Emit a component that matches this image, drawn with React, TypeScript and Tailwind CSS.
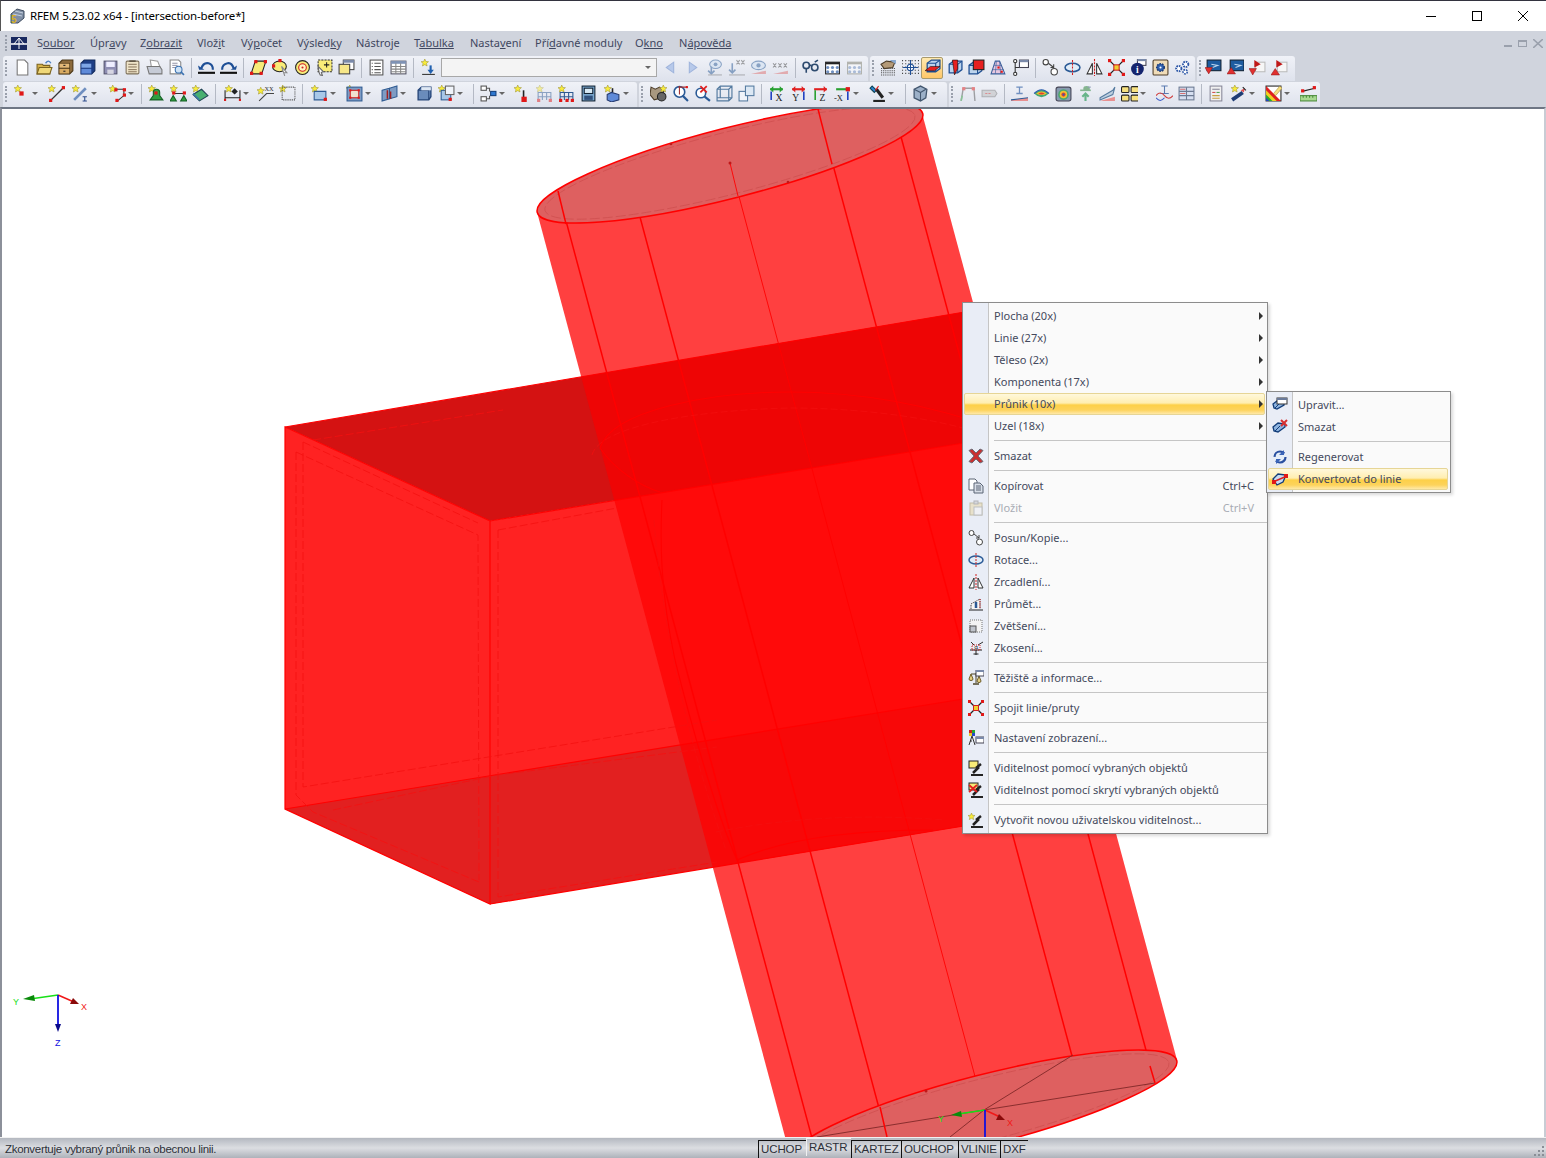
import React from "react";

const UI = "font-['Noto_Sans','DejaVu_Sans',sans-serif]";

const St = ({ x = 0, y = 0 }: { x?: number; y?: number }) => (
  <path transform={`translate(${x} ${y})`} d="M3.5 0l1 2.3 2.5.2-1.9 1.6.6 2.5-2.2-1.3-2.2 1.3.6-2.5L0 2.5l2.5-.2z" fill="#f8ec3a" stroke="#9a8f30" strokeWidth=".5" />
);
const R = ({ x, y, s = 3 }: { x: number; y: number; s?: number }) => <rect x={x} y={y} width={s} height={s} fill="#e01818" />;
const Cube = ({ x = 2, y = 2, f = "#bcd4ee" }: { x?: number; y?: number; f?: string }) => (
  <g transform={`translate(${x} ${y})`}><path d="M0 3l4-3h8v8l-4 3H0z" fill={f} stroke="#1f4f92" strokeWidth="1.200" /><path d="M0 3h8v8M8 3l4-3" fill="none" stroke="#1f4f92" /></g>
);
const Beads = ({ c = "#222" }: { c?: string }) => (
  <g><rect x="1.5" y="3" width="13" height="11" fill="#fff" stroke={c} /><path d="M1.5 3h13v2h-13z" fill={c} />{[3.5, 8, 12.5].map((x) => <g key={x}><circle cx={x} cy="8" r="1.5" fill="#6f8fc0" /><circle cx={x} cy="12" r="1.5" fill="#6f8fc0" /></g>)}</g>
);
const Pale = ({ children }: { children: React.ReactNode }) => <g opacity=".5">{children}</g>;

const I: Record<string, React.ReactNode> = {
  new: <path d="M3 1h7l3 3v11H3z" fill="#fff" stroke="#777" />,
  open: <g><path d="M1 5h5l1 1h6v8H1z" fill="#d6b24a" stroke="#7b6320" /><path d="M3 8h12l-2 6H1z" fill="#efd778" stroke="#7b6320" /><path d="M9 4q3-4 5 0" fill="none" stroke="#4b7fc0" strokeWidth="1.3" /></g>,
  brown: <g><path d="M1 4l3-3h10v10l-3 3H1z" fill="#8c6a3c" stroke="#4c3818" /><rect x="1" y="4" width="10" height="4.5" fill="#e2b878" stroke="#4c3818" strokeWidth=".6" /><rect x="1" y="9" width="10" height="5" fill="#d8aa62" stroke="#4c3818" strokeWidth=".6" /><rect x="5" y="5.5" width="2" height="1" fill="#222" /><rect x="5" y="11" width="2" height="1" fill="#222" /></g>,
  blue: <g><path d="M1 4l3-3h10v10l-3 3H1z" fill="#1f3f86" stroke="#122a5c" /><rect x="1" y="4" width="10" height="4.5" fill="#7ea6e6" stroke="#1f3f86" strokeWidth=".6" /><rect x="1" y="9" width="10" height="5" fill="#5f8ad8" stroke="#1f3f86" strokeWidth=".6" /></g>,
  save: <g><rect x="2" y="2" width="12" height="12" fill="#8f8fb4" stroke="#54546e" /><rect x="4" y="2.5" width="8" height="5" fill="#eef" /><rect x="5" y="10" width="6" height="4" fill="#d6d6e2" /></g>,
  clip: <g><rect x="2" y="2" width="12" height="12" rx="1" fill="#efe4c8" stroke="#7d705a" />{[5, 7.5, 10, 12].map((y) => <path key={y} d={`M4 ${y}h8`} stroke="#8d7a60" />)}<path d="M5 2h6" stroke="#5d5242" strokeWidth="1.5" /></g>,
  print: <g><path d="M4 1l7 1 2 5H5z" fill="#fff" stroke="#999" /><path d="M1 7h12l2 3v4H3z" fill="#c6cbd6" stroke="#777" /></g>,
  prev: <g><path d="M2 1h8l2 2v11H2z" fill="#fff" stroke="#888" />{[4, 6, 8].map((y) => <path key={y} d={`M4 ${y}h5`} stroke="#99a" />)}<circle cx="10" cy="10" r="3.2" fill="#cfe3f6" stroke="#3a71b0" /><path d="M12 12l3 3" stroke="#3a71b0" strokeWidth="1.6" /></g>,
  undo: <g><path d="M3 9q2-6 7-5 4 1 4 6" fill="none" stroke="#1e4f96" strokeWidth="2" /><path d="M0 6l6 4H1z" fill="#1e4f96" /><path d="M0 13h16" stroke="#111" strokeWidth="2" /></g>,
  redo: <g><path d="M2 10q0-5 5-6 4-1 6 5" fill="none" stroke="#1e4f96" strokeWidth="2" /><path d="M16 6l-1 4H10z" fill="#1e4f96" /><path d="M0 13h16" stroke="#111" strokeWidth="2" /></g>,
  para: <g><path d="M5 2h10l-4 12H1z" fill="#f8ec78" stroke="#222" /><R x={4} y={1} /><R x={13} y={1} /><R x={0} y={12} /><R x={9} y={12} /></g>,
  ell: <g><ellipse cx="7" cy="7" rx="6.5" ry="5" fill="#f8ec78" stroke="#222" /><R x={0} y={5} /><R x={6} y={0} /><path d="M9 7l5 6-3 0 1 3z" fill="#fff" stroke="#888" /></g>,
  tgt: <g><circle cx="8" cy="8" r="6.5" fill="#f8ec78" stroke="#222" /><circle cx="8" cy="8" r="3.6" fill="#fff6c0" stroke="#d02020" /><circle cx="8" cy="8" r="1" fill="#d02020" /></g>,
  addc: <g><rect x="2" y="1" width="13" height="11" fill="#f8ec78" stroke="#333" strokeDasharray="2 1" /><path d="M10 3v5M7.5 5.5h5" stroke="#222" /><path d="M2 7l5 5-2 .5 1 3-2-.5-1-2z" fill="#fff" stroke="#666" /></g>,
  win: <g><rect x="5" y="1" width="10" height="9" fill="#fff" stroke="#444" /><rect x="5" y="1" width="10" height="2.5" fill="#7a8aaa" /><rect x="1" y="5" width="10" height="9" fill="#f7e788" stroke="#444" /></g>,
  list: <g><rect x="2" y="1" width="12" height="14" fill="#fff" stroke="#555" />{[4, 7, 10, 13].map((y) => <path key={y} d={`M6 ${y}h6M3.5 ${y}h1`} stroke="#555" />)}</g>,
  grid: <g><rect x="1" y="2" width="14" height="12" fill="#fff" stroke="#556" /><rect x="1" y="2" width="14" height="2.5" fill="#7f93b6" /><path d="M1 7h14M1 9.5h14M1 12h14M5.5 4v10M10 4v10" stroke="#888" /></g>,
  stard: <g><St x={1} y={0} /><path d="M10 6v6" stroke="#2060b0" strokeWidth="2" /><path d="M7 10h6l-3 4z" fill="#2060b0" /><path d="M2 14.5h12" stroke="#333" /></g>,
  left: <path d="M11 3v10L4 8z" fill="#b7c9ea" stroke="#9fb4dc" />,
  right: <path d="M5 3v10l7-5z" fill="#b7c9ea" stroke="#9fb4dc" />,
  eyed: <Pale><ellipse cx="9" cy="5" rx="5.5" ry="4" fill="#cfe0f2" stroke="#2a5a96" /><circle cx="9" cy="5" r="1.8" fill="#2a5a96" /><path d="M5 7v6M2 11l3 3 3-3" fill="none" stroke="#2a5a96" strokeWidth="1.5" /><path d="M2 15h13" stroke="#777" /></Pale>,
  xxd: <Pale><path d="M4 4v8M1 10l3 3 3-3" fill="none" stroke="#2a5a96" strokeWidth="1.5" /><path d="M1 15h15" stroke="#777" /><path d="M8 1l3 4M11 1l-3 4M12.500 1l3 4M15.500 1l-3 4" stroke="#555" /></Pale>,
  eye: <Pale><ellipse cx="8" cy="6" rx="6.500" ry="4" fill="#cfe0f2" stroke="#2a5a96" /><circle cx="8" cy="6" r="2" fill="#2a5a96" /><path d="M1 14l14-3v3z" fill="#e07070" /></Pale>,
  xx: <Pale><path d="M1 4l3 4M4 4l-3 4M6 4l3 4M9 4l-3 4M11 4l3 4M14 4l-3 4" stroke="#444" /><path d="M1 14l14-3v3z" fill="#e07070" /></Pale>,
  gef: <g><circle cx="4" cy="6" r="3" fill="none" stroke="#2c4a6e" strokeWidth="1.5" /><circle cx="12" cy="8" r="3" fill="none" stroke="#2c4a6e" strokeWidth="1.5" /><path d="M4 9v4M7 6h2M12 3l3-2" stroke="#2c4a6e" strokeWidth="1.5" /></g>,
  beads: <Beads />,
  beadp: <Pale><Beads c="#776" /></Pale>,
  hand: <g>{[9, 11, 13, 15].map((y) => <path key={y} d={`M1 ${y}h14`} stroke="#444" strokeDasharray="1 1" />)}<path d="M1 5l5-3 8 1-2 5-8 1z" fill="#b49a78" stroke="#4c3c28" /><path d="M9 1h6v4" fill="#88a8d0" /></g>,
  gridt: <g>{[1, 4, 7, 10, 13].map((y) => <path key={y} d={`M0 ${y + .5}h16`} stroke="#444" strokeDasharray="1 2" />)}<circle cx="8" cy="8" r="3" fill="#fff" stroke="#1e4f96" /><path d="M8 1v14M1 8h14" stroke="#1e4f96" /></g>,
  cubeF: <g><Cube x={3} y={1} /><path d="M1 11l5-4h9l-5 4z" fill="#e62020" stroke="#000" strokeWidth=".5" /></g>,
  cubeV: <g><Cube x={3} y={2} /><path d="M6 1l2 14 3-6V1z" fill="#e62020" stroke="#000" strokeWidth=".5" /></g>,
  cubeR: <g><Cube x={1} y={3} /><rect x="5" y="1" width="10" height="9" fill="#e62020" stroke="#222" /></g>,
  gridp: <g><path d="M5 2h4l5 12H1z" fill="#e8c8e0" stroke="#3a5f9a" /><path d="M4 6h7M2 10h11M6 2l-1 12M9 2l1 12" stroke="#3a5f9a" strokeWidth=".6" /><R x={7} y={7} s={2} /><R x={10} y={11} s={2} /></g>,
  branch: <g><circle cx="3" cy="14" r="1.5" fill="#fff" stroke="#333" /><circle cx="3" cy="2" r="1.5" fill="#fff" stroke="#333" /><path d="M3 3v10M3 8h5" stroke="#333" /><rect x="7" y="1" width="8.500" height="7" fill="#fff" stroke="#445" /><rect x="7" y="1" width="8.500" height="2" fill="#7a8aaa" /></g>,
  move: <g><circle cx="3.500" cy="3" r="2.500" fill="#fff" stroke="#444" /><path d="M6 4l5 4M11 5v3H8" fill="none" stroke="#444" /><circle cx="11.500" cy="12" r="3" fill="#fff" stroke="#444" /></g>,
  rot: <g><ellipse cx="8" cy="8" rx="7" ry="4" fill="#e0ecf8" stroke="#2a5a96" strokeWidth="1.500" /><path d="M8 1v14" stroke="#d02020" strokeDasharray="2 1" /></g>,
  mir: <g><path d="M1 14L6 4v10zM15 14L10 4v10z" fill="#fff" stroke="#333" /><path d="M8 0v16" stroke="#d02020" strokeDasharray="2 1" /></g>,
  conn: <g><path d="M2 2l12 12M14 2L2 14" stroke="#222" strokeWidth="1.300" /><rect x="5.500" y="5.500" width="5" height="5" fill="#f0d030" stroke="#d02020" /><R x={0} y={0} /><R x={13} y={0} /><R x={0} y={13} /><R x={13} y={13} /></g>,
  info: <g><rect x="7" y="0" width="8" height="6" fill="#fff" stroke="#445" /><rect x="7" y="0" width="8" height="2" fill="#7a8aaa" /><circle cx="7" cy="9.500" r="6" fill="#14246e" /><text x="7" y="13" fontSize="9" fontWeight="700" textAnchor="middle" fill="#fff" fontFamily="Liberation Serif">i</text></g>,
  gearb: <g><rect x="1" y="1" width="14" height="14" rx="1" fill="#f0dcb8" stroke="#4c3c28" /><circle cx="8" cy="8" r="3.500" fill="#3060b0" stroke="#1e3c74" strokeWidth="1.500" strokeDasharray="1.500 1" /><circle cx="8" cy="8" r="1" fill="#fff" /></g>,
  gears: <g><circle cx="4.500" cy="9" r="2.500" fill="#fff" stroke="#2e58a8" strokeWidth="1.800" strokeDasharray="1.500 .8" /><circle cx="11" cy="5" r="2.500" fill="#fff" stroke="#2e58a8" strokeWidth="1.800" strokeDasharray="1.500 .8" /><circle cx="10.500" cy="12" r="2" fill="#fff" stroke="#2e58a8" strokeWidth="1.500" strokeDasharray="1.500 .8" /></g>,
  bd: <g><rect x="2" y="1" width="13" height="10" fill="#1e5ca0" stroke="#123" /><path d="M6 5l6 1-5 2" fill="none" stroke="#bcd6f0" /><path d="M0 8h7l-3.500 6z" fill="#e03030" stroke="#901818" strokeWidth=".5" /></g>,
  bu: <g><rect x="3" y="1" width="13" height="10" fill="#1e5ca0" stroke="#123" /><path d="M7 5l6 1-5 2" fill="none" stroke="#bcd6f0" /><path d="M0 14h8L4 8z" fill="#e03030" stroke="#901818" strokeWidth=".5" /></g>,
  rd: <g><rect x="6" y="3" width="9" height="9" fill="#f6f6f6" stroke="#bbb" /><path d="M5 1l6 4-6 3z" fill="#c01818" /><path d="M0 9h7l-3.500 6z" fill="#e03030" stroke="#901818" strokeWidth=".5" /></g>,
  ru: <g><rect x="6" y="3" width="9" height="9" fill="#f6f6f6" stroke="#bbb" /><path d="M5 1l6 4-6 3z" fill="#c01818" /><path d="M0 15h8L4 9z" fill="#e03030" stroke="#901818" strokeWidth=".5" /></g>,
  node: <g><St x={1} y={0} /><R x={6} y={6} s={4} /></g>,
  line: <g><St x={0} y={0} /><path d="M3 14L14 3" stroke="#333" strokeWidth="1.300" /><R x={1} y={13} /><R x={13} y={1} /></g>,
  ibeam: <g><St x={0} y={0} /><path d="M2 14L13 3" stroke="#6f8fc0" strokeWidth="2.500" /><path d="M10 11h4M12 11v4M10 15h4" stroke="#2a4a8a" /></g>,
  poly: <g><St x={0} y={0} /><path d="M6 4h8v6l-6 5" fill="none" stroke="#333" /><R x={5} y={3} /><R x={13} y={3} /><R x={13} y={8} /><R x={6} y={13} /></g>,
  supp: <g><St x={0} y={0} /><path d="M8 4a3 3 0 0 1 3 3v3l3 4H2l3-4V7a3 3 0 0 1 3-3z" fill="#30a040" stroke="#146024" /><R x={6} y={6} /></g>,
  supl: <g><St x={0} y={0} /><path d="M3 8h10" stroke="#333" /><R x={2} y={6} /><R x={12} y={6} /><path d="M0 15l3-5 3 5zM10 15l3-5 3 5z" fill="#30a040" stroke="#146024" /></g>,
  surf: <g><St x={0} y={0} /><path d="M1 9l8-5 6 6-8 5z" fill="#48b070" stroke="#245" /><path d="M1 9l6 6v-2L1 7z" fill="#3a7aa8" /></g>,
  dim: <g><St x={1} y={0} /><path d="M7 6l3-3 3 3-3 3z" fill="#222" /><path d="M1 5v10M15 5v10M1 12h14" stroke="#222" /><R x={0} y={13} s={2} /><R x={14} y={13} s={2} /></g>,
  txt: <g><St x={0} y={2} /><path d="M2 15L9 8h7" stroke="#444" fill="none" /><text x="7" y="6" fontSize="6" fill="#333" fontFamily="Liberation Serif">XX</text></g>,
  sel: <g><St x={0} y={0} /><rect x="3" y="2" width="12" height="12" fill="none" stroke="#444" strokeDasharray="1 1" /></g>,
  surfR: <g><St x={0} y={0} /><path d="M3 6h11v8H3z" fill="#a8c8e8" stroke="#2f5b92" /><R x={12} y={12} /></g>,
  frm: <g><St x={0} y={0} /><rect x="1" y="2" width="14" height="13" fill="#7e9cc4" stroke="#2f5b92" /><rect x="4" y="5" width="8" height="7" fill="#f0e0d0" stroke="#d02020" /><R x={3} y={4} s={2} /><R x={11} y={4} s={2} /><R x={3} y={11} s={2} /><R x={11} y={11} s={2} /></g>,
  wall: <g><path d="M1 5l7-2v10l-7 2zM8 3l7-2v10l-7 2z" fill="#7e9cc4" stroke="#2f5b92" /><path d="M6 5v8M9 6v7" stroke="#a02020" strokeWidth="1.400" /></g>,
  box3: <g><path d="M2 5l3-3h9v9l-2 3H2z" fill="#6a8cbc" stroke="#27477a" strokeWidth="1.300" /><path d="M2 5h10v9" fill="none" stroke="#27477a" /><path d="M5 2h9v3H5z" fill="#dfe8f4" /></g>,
  boxes: <g><St x={0} y={0} /><rect x="3" y="5" width="9" height="9" fill="#a8c8e8" stroke="#2f5b92" /><rect x="7" y="1" width="8" height="8" fill="#f0f4fa" stroke="#666" /><R x={10} y={12} /></g>,
  flow: <g><rect x="1" y="1" width="5" height="4" fill="#fff" stroke="#555" /><rect x="1" y="11" width="5" height="4" fill="#fff" stroke="#555" /><rect x="10" y="6" width="5" height="4" fill="#2f78d0" stroke="#14407c" /><path d="M6 3h3v3M6 13h3v-3" fill="none" stroke="#555" /></g>,
  stdn: <g><St x={0} y={0} /><path d="M9 5v7" stroke="#222" strokeWidth="1.500" /><R x={7} y={11} s={5} /></g>,
  fr1: <Pale><St x={0} y={0} /><path d="M2 14V7h12v7M6 7v7M10 7v7M2 11h12" fill="none" stroke="#2f5b92" /><R x={1} y={13} /><R x={12} y={13} /></Pale>,
  fr2: <g><St x={0} y={0} /><path d="M2 14V7h12v7M6 7v7M10 7v7M2 11h12" fill="none" stroke="#2f5b92" /><R x={1} y={13} /><R x={12} y={13} /><R x={7} y={13} /></g>,
  fr3: <g><rect x="2" y="1" width="12" height="14" fill="#7aa8d0" stroke="#123" /><rect x="4" y="3" width="8" height="5" fill="#d6e8f4" stroke="#123" /><rect x="4" y="10" width="8" height="4" fill="#30507c" /></g>,
  fr4: <g><St x={0} y={0} /><path d="M8 3v4" stroke="#222" strokeWidth="1.500" /><path d="M3 9l4-2 7 2v5l-7 2-4-2z" fill="#5f8ad8" stroke="#243a70" /></g>,
  hglass: <g><path d="M1 2l4 2 4-2 4 4-2 6-7 2-4-5z" fill="#a89880" stroke="#4c3c28" /><circle cx="11" cy="11" r="4" fill="#666" stroke="#222" /><St x={9} y={0} /></g>,
  zoomr: <g><circle cx="7" cy="6.500" r="5" fill="#fff" stroke="#2a5a96" strokeWidth="1.500" /><path d="M10 10l5 5" stroke="#2a5a96" strokeWidth="2" /><path d="M6 2h8M7 1v8" stroke="#a03030" /><R x={13} y={1} s={2} /></g>,
  zoomx: <g><circle cx="6.500" cy="7.500" r="4.500" fill="#fff" stroke="#2a5a96" strokeWidth="1.500" /><path d="M10 11l5 4" stroke="#2a5a96" strokeWidth="2" /><path d="M6 1l6 6M12 1L6 7" stroke="#e02020" strokeWidth="1.600" /></g>,
  wire: <g><path d="M1 4l3-3h11v11l-3 3H1zM1 4h11v11M12 4l3-3M4 1v11H1M4 12h11" fill="none" stroke="#557ba0" strokeWidth="1.100" /></g>,
  wire2: <g><rect x="1" y="6" width="8" height="9" fill="#f0f4fa" stroke="#557ba0" /><rect x="7" y="1" width="8" height="9" fill="#dce8f4" stroke="#557ba0" /></g>,
  vx: <g><path d="M2 4h12" stroke="#28a030" strokeWidth="2" /><path d="M2 4l3-3v6zM14 4l-3-3v6z" fill="#28a030" /><path d="M3 6v8" stroke="#2040c0" strokeWidth="1.500" /><text x="7" y="15" fontSize="9" fontFamily="Liberation Serif" fill="#222">X</text></g>,
  vy: <g><path d="M2 4h12" stroke="#e02020" strokeWidth="2" /><path d="M2 4l3-3v6zM14 4l-3-3v6z" fill="#e02020" /><path d="M13 6v8" stroke="#2040c0" strokeWidth="1.500" /><text x="2" y="15" fontSize="9" fontFamily="Liberation Serif" fill="#222">Y</text></g>,
  vz: <g><path d="M2 4h12" stroke="#e02020" strokeWidth="2" /><path d="M14 4l-3-3v6z" fill="#e02020" /><path d="M3 5v9" stroke="#28a030" strokeWidth="1.500" /><text x="7" y="15" fontSize="9" fontFamily="Liberation Serif" fill="#222">Z</text></g>,
  vmx: <g><path d="M2 4h12" stroke="#28a030" strokeWidth="2" /><R x={11} y={2} s={4} /><path d="M13 6v8" stroke="#2040c0" strokeWidth="1.500" /><text x="0" y="15" fontSize="8" fontFamily="Liberation Serif" fill="#222">-X</text></g>,
  scope: <g><path d="M3 1l4 4-2 2-4-4z" fill="#2a88d8" stroke="#145" /><path d="M7 4l6 8" stroke="#222" strokeWidth="3" /><path d="M4 15h11" stroke="#222" strokeWidth="2" /><path d="M9 1l-3 4" stroke="#e02020" /></g>,
  solid: <g><path d="M2 4l6-3 6 3-1 8-5 3-6-3z" fill="#9cb0c8" stroke="#42566e" strokeWidth="1.200" /><path d="M8 7l5-3M8 7l-6-3M8 7v8" stroke="#42566e" /></g>,
  fr: <Pale><path d="M2 15L4 3h10l1 12" fill="none" stroke="#555" strokeWidth="1.300" /><R x={3} y={2} /><R x={12} y={2} /><path d="M2 15l1-5" stroke="#30a040" strokeWidth="1.500" /></Pale>,
  tag: <Pale><path d="M1 5h12l2 3-2 3H1z" fill="#bbb" stroke="#777" /><path d="M4 8h6" stroke="#d03030" strokeDasharray="2 1" /></Pale>,
  beamT: <g><path d="M5 2h6M8 2v6M5 8h6" stroke="#6f8fc0" strokeWidth="1.200" /><path d="M0 14l16-2v3H0z" fill="#e89090" /><path d="M0 14l16-2" stroke="#2a5a96" /></g>,
  rainb: <g><path d="M1 8q7-7 14 0-7 7-14 0z" fill="#48a870" /><path d="M3 8q5-4 10 0-5 3-10 0z" fill="#f0c030" /><path d="M5 8q3-2 6 0-3 2-6 0z" fill="#e04030" /><path d="M1 8q7-7 14 0" fill="none" stroke="#3060b0" /></g>,
  rcube: <g><rect x="1" y="2" width="14" height="13" rx="2" fill="#889ab0" stroke="#445" /><circle cx="8" cy="9" r="5" fill="#48a870" /><circle cx="8" cy="9" r="3.500" fill="#f0c030" /><circle cx="8" cy="9" r="2" fill="#e04030" /><circle cx="8" cy="9" r="1" fill="#3060b0" /></g>,
  loads: <g opacity=".8"><path d="M6 3a3 2 0 0 1 6 0v2H6z" fill="#6ca878" /><path d="M3 5h10" stroke="#6ca878" strokeWidth="1.500" /><path d="M8 8v7M5 11l3-3 3 3" fill="none" stroke="#48a870" strokeWidth="2" /><path d="M13 2h-3" stroke="#7a8aaa" /></g>,
  plate: <g><path d="M1 12L13 5l2-3-2 7L1 14z" fill="#c0d0e0" stroke="#557ba0" /><path d="M1 15l14-4v4z" fill="#e89090" /></g>,
  cards: <g>{[[0, 1], [9, 1], [0, 9], [9, 9]].map(([x, y]) => <rect key={`${x}${y}`} x={x + .5} y={y + .5} width="7" height="5.500" rx="1" fill="#f6e080" stroke="#222" />)}</g>,
  wave: <g><path d="M5 1h6M8 1v7M4 8h8" stroke="#5a7ab0" /><path d="M0 10q4-5 8 0t8 0" fill="none" stroke="#d04040" /><path d="M0 12q4 5 8 0" fill="none" stroke="#3a5ac8" /></g>,
  table2: <g><rect x="1" y="2" width="14" height="12" fill="#d6dff0" stroke="#6c7a92" /><path d="M1 6h14M1 10h14M8 2v12" stroke="#6c7a92" /><path d="M2 4h5M2 8h5" stroke="#d87070" /></g>,
  report: <g><rect x="2" y="1" width="11" height="14" fill="#f0f0f0" stroke="#889" /><path d="M4 4h7" stroke="#889" /><path d="M4 7h3" stroke="#d05050" /><path d="M8 7h3" stroke="#50a050" /><path d="M4 10h7M4 12.500h7" stroke="#c8a040" /></g>,
  starScope: <g><St x={1} y={0} /><path d="M2 14l10-7" stroke="#1e3c74" strokeWidth="3.500" /><path d="M10 5l4-2-1 4z" fill="#e05050" /><path d="M12 2l3 3" stroke="#222" /></g>,
  color: <g><rect x="1" y="1" width="14" height="14" fill="#fff" stroke="#222" /><path d="M1 1l14 14H1z" fill="#e02020" /><path d="M1 5l10 10H1z" fill="#f0d020" /><path d="M1 9l6 6H1z" fill="#28a830" /><path d="M1 12l3 3H1z" fill="#2040c8" /><path d="M8 8l6-7 2 2-6 7z" fill="#f6e080" stroke="#a08030" strokeWidth=".5" /></g>,
  ruler: <g><rect x="0" y="10" width="16" height="5" fill="#a8d890" stroke="#4a8a3a" /><path d="M3 10v2M6 10v2M9 10v2M12 10v2" stroke="#4a8a3a" /><path d="M2 6l12-3" stroke="#222" /><R x={1} y={4} /><R x={12} y={1} /></g>,
  mdel: <path d="M1 2.500L4 1l4 4 4-4 3 1.500L10 8l5 5.500-3 1.500-4-4-4 4-3-1.500L6 8z" fill="#c83030" stroke="#6c6c78" />,
  mcopy: <g><path d="M1 1h6l2 2v9H1z" fill="#fff" stroke="#5a6474" /><path d="M6 5h6l3 3v7H6z" fill="#d8dee8" stroke="#5a6474" />{[8, 10, 12].map((y) => <path key={y} d={`M8 ${y}h5`} stroke="#5a6474" />)}</g>,
  mpaste: <g opacity=".55"><rect x="2" y="3" width="12" height="12" fill="#e8d9a8" stroke="#a69868" /><rect x="6" y="1" width="4" height="3" fill="#c8c8c8" stroke="#888" /><rect x="6" y="7" width="8" height="8" fill="#f4f4f4" stroke="#999" /></g>,
  mproj: <g><path d="M1 14h14" stroke="#222" /><path d="M3 13V8l9-5v10" fill="#f6f6f6" stroke="#444" strokeDasharray="1.500 1" /><path d="M8 6v6" stroke="#2a5a96" strokeWidth="2.500" /><path d="M12 3v10" stroke="#d02020" strokeDasharray="1 1" /></g>,
  mscale: <g><rect x="2" y="2" width="12" height="12" fill="#f4f4f4" stroke="#777" strokeDasharray="1 1" /><rect x="2" y="8" width="6" height="6" fill="#c0c4cc" stroke="#555" /></g>,
  mshear: <g><path d="M3 2l3 3M10 5l5-3" stroke="#333" /><path d="M2 10h12" stroke="#222" /><path d="M4 5h8v5H4z" fill="none" stroke="#d02020" strokeDasharray="1 1" /><path d="M8 10v5M5.500 14h5" stroke="#222" /><text x="8" y="9" fontSize="6" textAnchor="middle" fill="#222">α</text></g>,
  mbal: <g><path d="M8 3v10M3 4h9" stroke="#4c4428" /><path d="M1 9l2-5 2 5a2 1.500 0 0 1-4 0zM9 11l2-5 2 5a2 1.500 0 0 1-4 0z" fill="#e6d080" stroke="#6c5c28" /><path d="M5 14h6" stroke="#4c4428" strokeWidth="1.500" /><rect x="8" y="0" width="8" height="6" fill="#fff" stroke="#445" /><rect x="8" y="0" width="8" height="2" fill="#7a8aaa" /></g>,
  mdisp: <g><rect x="1" y="0" width="3" height="3" fill="#d02020" /><rect x="4" y="0" width="3" height="3" fill="#28a830" /><rect x="1" y="3" width="3" height="3" fill="#e8c820" /><rect x="4" y="3" width="3" height="3" fill="#2848c8" /><path d="M4 6l-3 9M4 6l3 9M4 11H2" stroke="#333" /><rect x="8" y="7" width="8" height="6" fill="#fff" stroke="#445" /><rect x="8" y="7" width="8" height="2" fill="#7a8aaa" /></g>,
  mvis1: <g><rect x="1" y="1" width="9" height="7" fill="#f8ec78" stroke="#222" /><path d="M8 8l5-4M5 13l6-6" stroke="#222" strokeWidth="2.500" /><path d="M3 15h12" stroke="#222" strokeWidth="2" /></g>,
  mvis2: <g><rect x="1" y="1" width="9" height="7" fill="#f8ec78" stroke="#222" /><path d="M8 8l5-4M5 13l6-6" stroke="#222" strokeWidth="2.500" /><path d="M3 15h12" stroke="#222" strokeWidth="2" /><path d="M1 3l8 7M9 3l-8 7" stroke="#e02020" strokeWidth="1.800" /></g>,
  mvis3: <g><St x={0} y={1} /><path d="M8 8l5-4M5 13l6-6" stroke="#222" strokeWidth="2.500" /><path d="M3 15h12" stroke="#222" strokeWidth="2" /></g>,
  sEdit: <g><path d="M1 7l4-3 7 1v3l-7 4-3-1z" fill="#8eb4e0" stroke="#123c78" strokeWidth="1.300" /><rect x="5" y="1" width="10" height="6" fill="#fff" stroke="#333" /><rect x="5" y="1" width="10" height="2" fill="#6a7a9a" /><path d="M3 11l4-4" stroke="#123c78" /></g>,
  sDel: <g><path d="M1 8l5-4 7 1v3l-7 5-4-1z" fill="#8eb4e0" stroke="#123c78" strokeWidth="1.300" /><path d="M3 12l5-5" stroke="#123c78" /><path d="M9 1l6 6M15 1L9 7" stroke="#d83030" strokeWidth="2" /></g>,
  sReg: <g><circle cx="8" cy="8" r="5.500" fill="#e6eef8" stroke="#2a50a0" strokeWidth="2.200" strokeDasharray="13 4" /><path d="M12 1v5H7zM4 15v-5h5z" fill="#3a64b8" /></g>,
  sConv: <g><path d="M1 8l5-5 8 1-3 7-6 3z" fill="#c8daf0" stroke="#123c78" strokeWidth="1.300" /><path d="M1 11L15 5" stroke="#d82020" strokeWidth="1.500" /><R x={0} y={9} s={4} /><R x={12} y={3} s={4} /></g>,
};

const T = ({ n, active }: { n: string; active?: boolean }) => (
  <div className={`w-[22px] h-[22px] flex items-center justify-center shrink-0 ${active ? "border border-[#a99a6c] rounded-[2px] bg-gradient-to-b from-[#ffe9ae] to-[#ffc768]" : ""}`}>
    <svg width="17" height="17" viewBox="0 0 16 16">{I[n]}</svg>
  </div>
);
const Sep = () => <div className="w-[8px] h-[20px] flex justify-center shrink-0"><div className="w-px h-full bg-[#b4b9c4]" /></div>;
const Dd = ({ w = "w-[13px]" }: { w?: string }) => <div className={`${w} h-[22px] flex items-center shrink-0`}><div className="w-0 h-0 border-l-[3px] border-r-[3px] border-t-[3px] border-l-transparent border-r-transparent border-t-[#666]" /></div>;
const Grip = () => <div className="w-[5px] h-[20px] flex flex-col justify-between py-[2px] shrink-0 items-center">{[0, 1, 2, 3, 4].map((i) => <div key={i} className="w-[2px] h-[2px] bg-[#9aa0ac]" />)}</div>;
const Bar = ({ w, children }: { w: string; children: React.ReactNode }) => (
  <div className={`${w} h-[25px] pb-[2px] shrink-0 flex items-center rounded-t-[3px] bg-gradient-to-b from-[#f0f2f8] to-[#dee2ec]`}>{children}</div>
);

const MENU: [string, string, string][] = [
  ["S", "oubor", ""], ["Úpr", "a", "vy"], ["Z", "obrazit", ""], ["Vlož", "i", "t"], ["Vý", "p", "očet"], ["Výsled", "k", "y"],
  ["Nástro", "j", "e"], ["T", "abulka", ""], ["Nasta", "v", "ení"], ["Pří", "d", "avné moduly"], ["O", "kno", ""], ["N", "ápověda", ""],
];
const MW = ["w-[53px]", "w-[50px]", "w-[57px]", "w-[44px]", "w-[56px]", "w-[59px]", "w-[58px]", "w-[56px]", "w-[65px]", "w-[100px]", "w-[44px]", "w-[60px]"];

type MI = { t?: string; i?: string; k?: string; arrow?: boolean; hot?: boolean; dim?: boolean; sep?: boolean };
const MAIN: MI[] = [
  { t: "Plocha (20x)", arrow: true }, { t: "Linie (27x)", arrow: true }, { t: "Těleso (2x)", arrow: true }, { t: "Komponenta (17x)", arrow: true },
  { t: "Průnik (10x)", arrow: true, hot: true }, { t: "Uzel (18x)", arrow: true }, { sep: true },
  { t: "Smazat", i: "mdel" }, { sep: true },
  { t: "Kopírovat", i: "mcopy", k: "Ctrl+C" }, { t: "Vložit", i: "mpaste", k: "Ctrl+V", dim: true }, { sep: true },
  { t: "Posun/Kopie...", i: "move" }, { t: "Rotace...", i: "rot" }, { t: "Zrcadlení...", i: "mir" }, { t: "Průmět...", i: "mproj" }, { t: "Zvětšení...", i: "mscale" }, { t: "Zkosení...", i: "mshear" }, { sep: true },
  { t: "Těžiště a informace...", i: "mbal" }, { sep: true },
  { t: "Spojit linie/pruty", i: "conn" }, { sep: true },
  { t: "Nastavení zobrazení...", i: "mdisp" }, { sep: true },
  { t: "Viditelnost pomocí vybraných objektů", i: "mvis1" }, { t: "Viditelnost pomocí skrytí vybraných objektů", i: "mvis2" }, { sep: true },
  { t: "Vytvořit novou uživatelskou viditelnost...", i: "mvis3" },
];
const SUB: MI[] = [
  { t: "Upravit...", i: "sEdit" }, { t: "Smazat", i: "sDel" }, { sep: true }, { t: "Regenerovat", i: "sReg" }, { t: "Konvertovat do linie", i: "sConv", hot: true },
];

const Rows = ({ items, gutter }: { items: MI[]; gutter: string }) => (
  <>
    {items.map((m, idx) =>
      m.sep ? (
        <div key={idx} className="h-[8px] flex items-start pt-[3px] relative">
          <div className={`${gutter} shrink-0`} />
          <div className="flex-1 h-px bg-[#c5c5c5] ml-[6px]" />
        </div>
      ) : (
        <div key={idx} className={`h-[22px] flex items-center relative shrink-0 text-[11px] ${m.dim ? "text-[#a8acb4]" : "text-[#44495c]"}`}>
          {m.hot && <div className="absolute left-[1px] right-[2px] top-0 bottom-0 rounded-[2px] border border-[#e6d596] bg-[linear-gradient(#fff8dc_0%,#ffeeb0_45%,#fdd048_55%,#fdd35c_80%,#ffe9a8_100%)]" />}
          <div className={`${gutter} relative flex items-center justify-center shrink-0`}>
            {m.i && <svg width="16" height="16" viewBox="0 0 16 16">{I[m.i]}</svg>}
          </div>
          <div className="relative pl-[6px] flex-1 whitespace-nowrap">{m.t}</div>
          {m.k && <div className="relative mr-[13px]">{m.k}</div>}
          {m.arrow && <div className="relative mr-[4px] w-0 h-0 border-t-[4px] border-b-[4px] border-l-[4px] border-t-transparent border-b-transparent border-l-[#333]" />}
        </div>
      )
    )}
  </>
);

const TABS: [string, string, boolean][] = [
  ["UCHOP", "w-[48px]", false], ["RASTR", "w-[45px]", true], ["KARTEZ", "w-[50px]", false], ["OUCHOP", "w-[57px]", false], ["VLINIE", "w-[42px]", false], ["DXF", "w-[28px]", false],
];

const CYL = "M537 212 L922 113 L1177 1060 L791 1159 Z";
const Gen = ({ x, y, w = 1.5 }: { x: number; y: number; w?: number }) => <line x1={x} y1={y} x2={x + 254} y2={y + 947} stroke="#ff0000" strokeWidth={w} />;

const Scene = () => (
  <svg className="absolute inset-0" width="1546" height="1028" viewBox="0 109 1546 1028">
    <defs><clipPath id="cyl"><path d={CYL} /></clipPath></defs>
    <path d={CYL} fill="#ff4040" />
    <polygon points="285,427 490,521 490,904 285,809" fill="#ff2222" />
    <polygon points="490,521 1000,437 1000,820 490,904" fill="#ff2222" />
    <polygon points="285,427 1000,306 1000,437 490,521" fill="#d41212" />
    <polygon points="285,809 1000,693 1000,820 490,904" fill="#e22020" />
    <g clipPath="url(#cyl)">
      <polygon points="285,427 1000,306 1000,437 490,521" fill="#ee0505" />
      <polygon points="490,521 1000,437 1000,693 285,809" fill="#ff0a0a" />
      <polygon points="285,809 1000,693 1000,820 490,904" fill="#f80808" />
    </g>
    <g fill="none" stroke="#ff0000" strokeWidth="1.200">
      <path d="M285 427 L490 521 L490 904 L285 809 Z" />
      <path d="M490 521 L1000 437 M490 904 L1000 820 M285 809 L1000 693 M285 427 L1000 306" />
    </g>
    <g fill="none" stroke="#f41010" strokeWidth=".8" strokeDasharray="8 3">
      <path d="M296 452 L478 535 L479 880 M303 442 V787 L717 720 M296 452 V795 L313 812 L479 882" />
      <path d="M498 530 L617 508 M498 530 V897 L717 862 M333 810 L497 775 L717 747" />
      <path d="M313 440 L503 410 M303 442 L478 523" />
    </g>
    <Gen x={558} y={191} />
    <Gen x={640} y={217} />
    <Gen x={818} y={109} />
    <Gen x={900} y={133} />
    <line x1="730" y1="163" x2="984" y2="1110" stroke="#ff0000" strokeWidth=".9" />
    <g transform="rotate(-14.4 730 163)">
      <ellipse cx="730" cy="163" rx="199" ry="35" fill="#de6060" stroke="#ff0000" strokeWidth="1.500" />
      <ellipse cx="730" cy="163" rx="191" ry="31" fill="none" stroke="#d05050" strokeWidth=".8" strokeDasharray="10 3" />
    </g>
    <line x1="818" y1="109" x2="832" y2="164" stroke="#ff0000" strokeWidth="1.500" />
    <line x1="558" y1="191" x2="566" y2="224" stroke="#ff0000" strokeWidth="1.500" />
    <line x1="730" y1="163" x2="738" y2="196" stroke="#ff0000" strokeWidth=".9" />
    <circle cx="730" cy="163" r="1.500" fill="#c01818" />
    <circle cx="671" cy="144" r="1.300" fill="#c01818" />
    <circle cx="788" cy="182" r="1.300" fill="#c01818" />
    <g transform="rotate(-14.4 984 1110)">
      <ellipse cx="984" cy="1110" rx="199" ry="35" fill="#de6060" stroke="#ff0000" strokeWidth="1.500" />
      <ellipse cx="984" cy="1110" rx="191" ry="31" fill="none" stroke="#d05050" strokeWidth=".8" strokeDasharray="10 3" />
    </g>
    <g stroke="#802828" strokeWidth=".9">
      <path d="M984 1110 L1073 1055 M984 1110 L1155 1083 M984 1110 L817 1137 M984 1110 L950 1137" />
    </g>
    <path d="M880 1107 L887 1137 M1155 1083 L1150 1066" stroke="#ff0000" strokeWidth="1.500" />
    <circle cx="926" cy="1091" r="1.500" fill="#c01818" />
    <g fill="none" stroke="#ff0000" strokeWidth="1.100">
      <path d="M600 448 C612 410 710 392 790 392 C870 392 940 408 1000 430" />
      <path d="M600 448 C615 470 640 486 660 492" />
      <path d="M662 500 C660 540 660 590 675 660 C690 720 715 810 737 860 C790 836 870 830 933 830" />
    </g>
    <g fill="none" stroke="#f41010" strokeWidth=".7" strokeDasharray="7 3">
      <path d="M592 455 C600 425 700 410 790 408 C870 408 950 420 1000 440" />
      <path d="M654 520 C660 600 680 720 726 850" />
      <path d="M716 832 C800 815 880 815 945 820" />
    </g>
    {/* axes */}
    <line x1="58" y1="995" x2="30" y2="999" stroke="#18e018" strokeWidth="1.500" />
    <path d="M23 999 L34 995 L35 1001 Z" fill="#0a8a0a" />
    <line x1="58" y1="995" x2="74" y2="1002" stroke="#f01818" strokeWidth="1.500" />
    <path d="M79 1004 L70 1004 L73 998 Z" fill="#8a0a0a" />
    <line x1="58" y1="995" x2="58" y2="1026" stroke="#1010e0" strokeWidth="1.800" />
    <path d="M58 1032 L55 1024 H61 Z" fill="#0a0a8a" />
    <text x="13" y="1005" fontSize="9" fill="#18e018" fontFamily="Liberation Sans">Y</text>
    <text x="81" y="1010" fontSize="9" fill="#f01818" fontFamily="Liberation Sans">X</text>
    <text x="55" y="1046" fontSize="9" fill="#1010e0" fontFamily="Liberation Sans">Z</text>
    <line x1="985" y1="1110" x2="958" y2="1114" stroke="#18e018" strokeWidth="1.500" />
    <path d="M951 1115 L961 1111 L962 1117 Z" fill="#0a8a0a" />
    <line x1="985" y1="1110" x2="1000" y2="1117" stroke="#f01818" strokeWidth="1.500" />
    <path d="M1005 1120 L996 1120 L999 1114 Z" fill="#8a0a0a" />
    <line x1="985" y1="1110" x2="985" y2="1137" stroke="#1010e0" strokeWidth="1.800" />
    <text x="938" y="1122" fontSize="9" fill="#18e018" fontFamily="Liberation Sans">Y</text>
    <text x="1007" y="1126" fontSize="9" fill="#f01818" fontFamily="Liberation Sans">X</text>
  </svg>
);

export default function App() {
  return (
    <div className={`w-[1546px] h-[1158px] overflow-hidden flex flex-col bg-white ${UI}`}>
      <div className="h-[31px] shrink-0 flex items-center border-t border-t-[#33333f] border-l border-l-[#555] relative">
        <svg className="ml-[8px]" width="16" height="16" viewBox="0 0 16 16">
          <path d="M2 6l6-5 7 2v7l-6 5H2z" fill="#7f8ea4" stroke="#3d4a5e" /><path d="M6 3l8 2M4 6l9 2" stroke="#c4cede" /><text x="2" y="15" fontSize="10" fontWeight="700" fill="#d8b020" fontFamily="Liberation Sans">5</text>
        </svg>
        <div className="ml-[5px] text-[11.5px] tracking-[-0.15px] text-black whitespace-nowrap">RFEM 5.23.02 x64 - [intersection-before*]</div>
        <div className="ml-auto flex items-center">
          <div className="w-[46px] flex justify-center"><div className="w-[10px] h-px bg-black" /></div>
          <div className="w-[46px] flex justify-center"><div className="w-[10px] h-[10px] border border-black" /></div>
          <div className="w-[46px] flex justify-center">
            <svg width="10" height="10" viewBox="0 0 10 10"><path d="M0 0l10 10M10 0L0 10" stroke="#000" strokeWidth="1" /></svg>
          </div>
        </div>
      </div>

      <div className="h-[24px] shrink-0 bg-[#d0d4dd] flex items-center pl-[3px] relative">
        <Grip />
        <svg className="ml-[3px] mr-[10px]" width="16" height="13" viewBox="0 0 16 13"><rect width="16" height="13" fill="#1a2a60" /><path d="M0 7h16" stroke="#fff" strokeWidth="1.500" /><path d="M8 1L3 7M8 1l5 6M8 1v11" stroke="#fff" /></svg>
        <div className="flex items-center text-[11px] text-[#3f4760]">
          {MENU.map((m, i) => <div key={i} className={`${MW[i]} shrink-0 whitespace-nowrap`}>{m[0]}<u>{m[1]}</u>{m[2]}</div>)}
        </div>
        <div className="ml-auto mr-[3px] flex items-center gap-[6px] text-[#9aa0ac]">
          <div className="w-[8px] h-[2px] bg-[#9aa0ac] mt-[6px]" />
          <div className="w-[9px] h-[7px] border border-[#9aa0ac] border-t-2" />
          <svg width="10" height="9" viewBox="0 0 10 9"><path d="M0 0l10 9M10 0L0 9" stroke="#9aa0ac" strokeWidth="1.600" /></svg>
        </div>
      </div>

      <div className="h-[26px] shrink-0 bg-[#d0d4dd] flex items-end pl-[3px] gap-[2px]">
        <Bar w="w-[865px]">
          <Grip />
          <div className="w-[3px]" />
          {["new", "open", "brown", "blue", "save", "clip", "print", "prev"].map((n) => <T key={n} n={n} />)}
          <Sep /><T n="undo" /><T n="redo" /><Sep />
          {["para", "ell", "tgt", "addc", "win"].map((n) => <T key={n} n={n} />)}
          <Sep /><T n="list" /><T n="grid" /><Sep /><T n="stard" />
          <div className="ml-[2px] w-[216px] h-[19px] shrink-0 border border-[#a8a8a8] bg-[#f4f4f4] flex items-center justify-end pr-[5px]">
            <div className="w-0 h-0 border-l-[3px] border-r-[3px] border-t-[3px] border-l-transparent border-r-transparent border-t-[#666]" />
          </div>
          <div className="w-[2px]" />
          {["left", "right", "eyed", "xxd", "eye", "xx"].map((n) => <T key={n} n={n} />)}
          <Sep />
          {["gef", "beads", "beadp"].map((n) => <T key={n} n={n} />)}
        </Bar>
        <Bar w="w-[325px]">
          <Grip />
          <div className="w-[2px]" />
          <T n="hand" /><T n="gridt" /><T n="cubeF" active /><T n="cubeV" /><T n="cubeR" /><T n="gridp" /><T n="branch" />
          <Sep />
          {["move", "rot", "mir", "conn", "info", "gearb", "gears"].map((n) => <T key={n} n={n} />)}
        </Bar>
        <Bar w="w-[98px]">
          <Grip />
          <T n="bd" /><T n="bu" /><T n="rd" /><T n="ru" />
        </Bar>
      </div>

      <div className="h-[26px] shrink-0 bg-[#d0d4dd] flex items-end pl-[3px] gap-[2px]">
        <Bar w="w-[634px]">
          <Grip />
          <div className="w-[2px]" />
          <T n="node" /><Dd /><T n="line" /><div className="w-[2px]" /><T n="ibeam" /><Dd /><div className="w-[2px]" /><T n="poly" /><Dd w="w-[9px]" /><Sep />
          <T n="supp" /><T n="supl" /><T n="surf" /><Sep />
          <div className="w-[2px]" /><T n="dim" /><Dd w="w-[11px]" /><T n="txt" /><T n="sel" /><Sep />
          <div className="w-[2px]" /><T n="surfR" /><Dd /><T n="frm" /><Dd /><T n="wall" /><Dd /><T n="box3" /><T n="boxes" /><Dd w="w-[12px]" /><Sep />
          <T n="flow" /><Dd w="w-[12px]" /><T n="stdn" /><T n="fr1" /><T n="fr2" /><T n="fr3" /><div className="w-[2px]" /><T n="fr4" /><Dd />
        </Bar>
        <Bar w="w-[308px]">
          <Grip />
          <div className="w-[3px]" />
          <T n="hglass" /><T n="zoomr" /><T n="zoomx" /><T n="wire" /><T n="wire2" /><Sep />
          <T n="vx" /><T n="vy" /><T n="vz" /><T n="vmx" /><Dd /><T n="scope" /><Dd /><Sep />
          <T n="solid" /><Dd />
        </Bar>
        <Bar w="w-[371px]">
          <Grip />
          <div className="w-[2px]" />
          <T n="fr" /><T n="tag" /><Sep />
          <T n="beamT" /><T n="rainb" /><T n="rcube" /><T n="loads" /><T n="plate" /><T n="cards" /><Dd /><T n="wave" /><T n="table2" /><Sep />
          <T n="report" /><T n="starScope" /><Dd /><T n="color" /><Dd /><T n="ruler" />
        </Bar>
      </div>

      <div className="flex-1 relative border-t-2 border-t-[#6e7684] border-l-2 border-l-[#8c909a] border-r-2 border-r-[#c8ccd4] overflow-hidden bg-white">
        <div className="absolute -left-[2px] top-0 w-[1546px] h-[1028px]">
          <Scene />
          <div className="absolute left-[962px] top-[193px] w-[306px] h-[532px] border border-[#8c8c8c] bg-[#fafafa] py-[2px] shadow-[2px_2px_3px_rgba(0,0,0,0.15)]">
            <div className="absolute left-0 top-0 bottom-0 w-[26px] bg-[#e9edf6] border-r border-r-[#c5c5c5]" />
            <div className="relative"><Rows items={MAIN} gutter="w-[25px]" /></div>
          </div>
          <div className="absolute left-[1266px] top-[282px] w-[185px] h-[102px] border border-[#8c8c8c] bg-[#fafafa] py-[2px] shadow-[2px_2px_3px_rgba(0,0,0,0.15)]">
            <div className="absolute left-0 top-0 bottom-0 w-[26px] bg-[#e9edf6] border-r border-r-[#c5c5c5]" />
            <div className="relative"><Rows items={SUB} gutter="w-[25px]" /></div>
          </div>
        </div>
      </div>

      <div className="h-[21px] shrink-0 border-t border-t-[#f2f2f2] bg-gradient-to-b from-[#b4b8c0] via-[#dcdee2] to-[#aeb2ba] flex items-end relative font-['Liberation_Sans',sans-serif] text-[11.5px] text-[#2c3038]">
        <div className="w-[758px] shrink-0 pl-[5px] h-[17px] tracking-[-0.3px] whitespace-nowrap">Zkonvertuje vybraný průnik na obecnou linii.</div>
        {TABS.map(([t, w, up]) => (
          <div key={t} className={`${w} shrink-0 h-[18px] pl-[2px] tracking-[-0.1px] whitespace-nowrap border-l border-t ${up ? "border-l-[#f0f0f0] border-t-[#f0f0f0] -translate-y-[2px]" : "border-l-[#111] border-t-[#111]"}`}>{t}</div>
        ))}
        <svg className="absolute right-[1px] bottom-[1px]" width="12" height="12" viewBox="0 0 12 12"><g fill="#8a8e96"><rect x="9" y="1" width="2" height="2" /><rect x="5" y="5" width="2" height="2" /><rect x="9" y="5" width="2" height="2" /><rect x="1" y="9" width="2" height="2" /><rect x="5" y="9" width="2" height="2" /><rect x="9" y="9" width="2" height="2" /></g></svg>
      </div>
    </div>
  );
}
